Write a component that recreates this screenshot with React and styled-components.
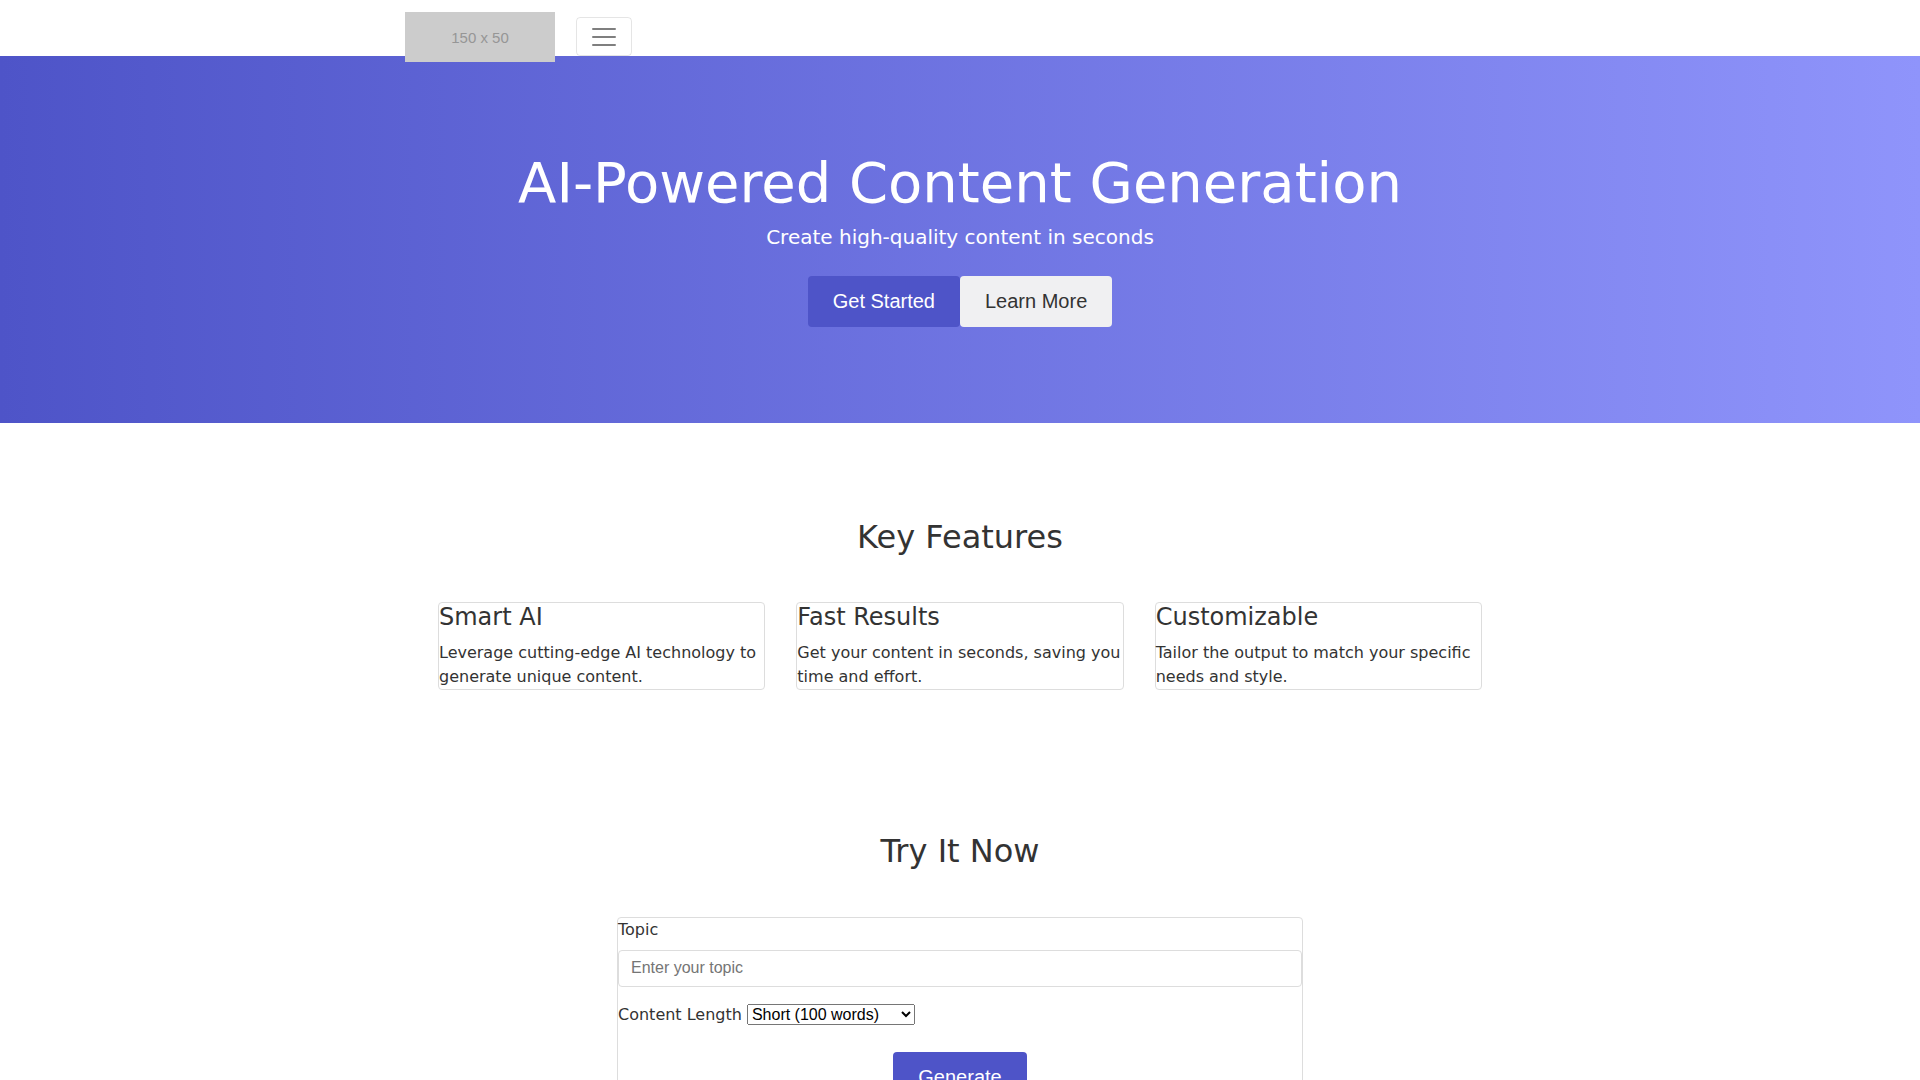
import React from "react";
import styled, { createGlobalStyle } from "styled-components";

const GlobalStyle = createGlobalStyle`
  * { box-sizing: border-box; }
  body {
    margin: 0;
    font-family: "DejaVu Sans", sans-serif;
    font-size: 16px;
    line-height: 1.5;
    color: #333;
    background: #fff;
  }
`;

const NavBar = styled.header`
  position: relative;
  z-index: 2;
  height: 56px;
  background: #fff;
`;

const NavInner = styled.div`
  width: 1110px;
  margin: 0 auto;
  display: flex;
  align-items: flex-start;
  gap: 21px;
  padding-top: 12px;
`;

const LogoBox = styled.div`
  width: 150px;
  height: 50px;
  padding-top: 2px;
  background: #cccccc;
  color: #969696;
  font-family: "Liberation Sans", Arial, sans-serif;
  font-size: 15px;
  display: flex;
  align-items: center;
  justify-content: center;
`;

const Toggler = styled.button`
  margin-top: 5px;
  width: 56px;
  height: 39px;
  padding: 0;
  background: transparent;
  border: 1px solid rgba(0, 0, 0, 0.1);
  border-radius: 4px;
  display: flex;
  align-items: center;
  justify-content: center;
`;

const Hero = styled.section`
  height: 367px;
  background: linear-gradient(to right, #4e54c8, #8f94fb);
  color: #fff;
  text-align: center;
  padding-top: 93px;
`;

const HeroTitle = styled.h1`
  margin: 0 0 6px;
  font-size: 56px;
  font-weight: 400;
  line-height: 1.2;
`;

const HeroLead = styled.p`
  margin: 0 0 24px;
  font-size: 20px;
  line-height: 1.5;
`;

const ButtonRow = styled.div`
  display: flex;
  justify-content: center;
`;

const Button = styled.button`
  font-family: "Liberation Sans", Arial, sans-serif;
  font-size: 20px;
  line-height: normal;
  padding: 14px 25px;
  border: none;
  border-radius: 4px;
  cursor: pointer;
  background: ${(p) => (p.$variant === "light" ? "#f0f0f2" : "#4e54c8")};
  color: ${(p) => (p.$variant === "light" ? "#333" : "#fff")};
`;

const Section = styled.section`
  padding: ${(p) => p.$pad || "95px 0 0"};
  text-align: center;
`;

const SectionTitle = styled.h2`
  margin: 0 0 46px;
  font-size: 32px;
  font-weight: 400;
  line-height: 1.2;
`;

const CardGrid = styled.div`
  width: 1044px;
  margin: 0 auto;
  display: grid;
  grid-template-columns: repeat(3, 1fr);
  gap: 31px;
  text-align: left;
`;

const Card = styled.div`
  border: 1px solid #dddddd;
  border-radius: 4px;
`;

const CardTitle = styled.h3`
  margin: 0 0 9px;
  font-size: 24px;
  font-weight: 400;
  line-height: 1.2;
`;

const CardText = styled.p`
  margin: 0;
  font-size: 16px;
  line-height: 1.5;
`;

const FormBox = styled.form`
  width: 686px;
  margin: 0 auto;
  border: 1px solid #dddddd;
  border-radius: 4px;
  text-align: left;
  padding-bottom: 20px;
`;

const FieldGroup = styled.div`
  margin-bottom: 16px;
`;

const Label = styled.label`
  display: ${(p) => (p.$block ? "block" : "inline")};
  margin-bottom: ${(p) => (p.$block ? "8px" : "0")};
  font-size: 16px;
`;

const TextInput = styled.input`
  display: block;
  width: 100%;
  height: 37px;
  padding: 6px 12px;
  font-family: "Liberation Sans", Arial, sans-serif;
  font-size: 16px;
  color: #333;
  border: 1px solid #dddddd;
  border-radius: 4px;
  &::placeholder { color: #757575; }
`;

const Select = styled.select`
  font-family: "Liberation Sans", Arial, sans-serif;
  font-size: 16px;
  margin-left: 5px;
`;

const SubmitRow = styled.div`
  display: flex;
  justify-content: center;
  padding-top: 9px;
`;

const features = [
  { title: "Smart AI", text: "Leverage cutting-edge AI technology to generate unique content." },
  { title: "Fast Results", text: "Get your content in seconds, saving you time and effort." },
  { title: "Customizable", text: "Tailor the output to match your specific needs and style." },
];

export default function App() {
  return (
    <>
      <GlobalStyle />
      <NavBar>
        <NavInner>
          <LogoBox>150 x 50</LogoBox>
          <Toggler aria-label="Toggle navigation">
            <svg width="30" height="30" viewBox="0 0 30 30">
              <path
                d="M4 7h22M4 15h22M4 23h22"
                stroke="rgba(0,0,0,0.5)"
                strokeWidth="2"
                strokeLinecap="round"
              />
            </svg>
          </Toggler>
        </NavInner>
      </NavBar>
      <Hero>
        <HeroTitle>AI-Powered Content Generation</HeroTitle>
        <HeroLead>Create high-quality content in seconds</HeroLead>
        <ButtonRow>
          <Button>Get Started</Button>
          <Button $variant="light">Learn More</Button>
        </ButtonRow>
      </Hero>
      <Section>
        <SectionTitle>Key Features</SectionTitle>
        <CardGrid>
          {features.map((f) => (
            <Card key={f.title}>
              <CardTitle>{f.title}</CardTitle>
              <CardText>{f.text}</CardText>
            </Card>
          ))}
        </CardGrid>
      </Section>
      <Section $pad="142px 0 60px">
        <SectionTitle>Try It Now</SectionTitle>
        <FormBox onSubmit={(e) => e.preventDefault()}>
          <FieldGroup>
            <Label $block htmlFor="topic">Topic</Label>
            <TextInput id="topic" type="text" placeholder="Enter your topic" />
          </FieldGroup>
          <FieldGroup>
            <Label htmlFor="length">Content Length</Label>
            <Select id="length" defaultValue="short">
              <option value="short">Short (100 words)</option>
              <option value="medium">Medium (300 words)</option>
              <option value="long">Long (500 words)</option>
            </Select>
          </FieldGroup>
          <SubmitRow>
            <Button type="submit">Generate</Button>
          </SubmitRow>
        </FormBox>
      </Section>
    </>
  );
}
